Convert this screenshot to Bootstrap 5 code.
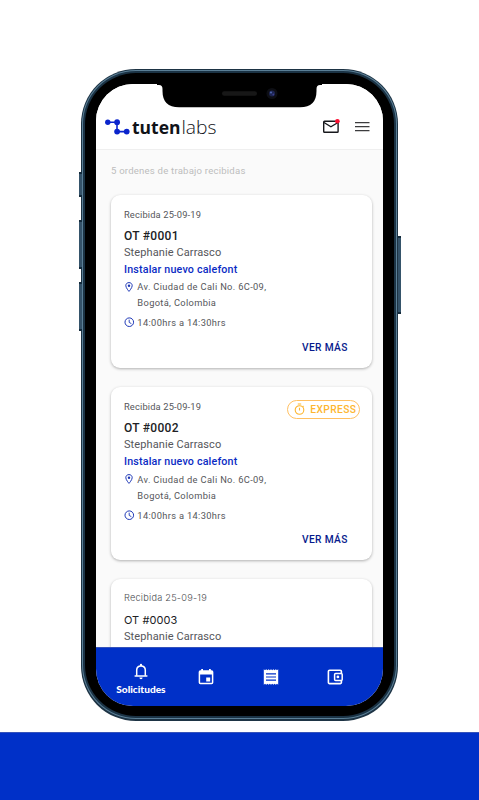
<!DOCTYPE html>
<html lang="es">
<head>
<meta charset="utf-8">
<meta name="viewport" content="width=device-width, initial-scale=1">
<title>Tutenlabs</title>
<link href="https://cdn.jsdelivr.net/npm/bootstrap@5.3.0/dist/css/bootstrap.min.css" rel="stylesheet">
<style>
  body { font-family: Roboto, "Liberation Sans", sans-serif; background: #fff; color: #55565a; }
  .stage { width: 479px; height: 800px; padding-top: 69px; }
  .phone { width: 317px; height: 651.5px; margin-left: 81px; border-radius: 55px; padding: 1.2px;
    background: #1d3344; }
  .phone-rim { border-radius: 54px; padding: 1.3px; background: #5b7f96; }
  .phone-edge { border-radius: 53px; padding: 1.9px; background: #1b3345; }
  .phone-bezel { border-radius: 51px; padding: 11px 10.6px 10.4px; background: #000; }
  .screen { border-radius: 37px; background: #fafafa; }
  .side-key { width: 3px; background: #35536a; border-top: 2px solid #142b3c; border-bottom: 2px solid #142b3c; }
  .key-a { left: 78.5px; top: 172px; height: 25px; }
  .key-b { left: 78.5px; top: 220px; height: 49px; }
  .key-c { left: 78.5px; top: 282px; height: 49px; }
  .key-d { left: 398px; top: 236px; height: 78px; }
  .notch { left: 157px; top: 83px; }
  .topbar { height: 65.5px; padding: 29px 12px 0 9px; background: #fff; border-bottom: 1px solid #efefef; }
  .summary { padding: 14px 0 0 15px; height: 45.5px; font-size: 9.6px; line-height: 14px; letter-spacing: .2px; color: #bdbdbd; }
  .feed { height: 497px; }
  .order { width: 260.5px; height: 173px; margin: 0 0 18.7px 15.5px; padding: 13.7px 12px 0 12.5px; border: 0; border-radius: 9px;
    box-shadow: 0 1px 3px rgba(0,0,0,.3); color: #55565a; }
  .received { font-size: 9.3px; line-height: 12px; letter-spacing: .16px; }
  .number { margin-top: 6.1px; font-size: 12px; line-height: 18px; font-weight: 500; letter-spacing: .28px; color: #202124; }
  .client { font-size: 11px; line-height: 16px; letter-spacing: .1px; }
  .task { font-size: 10.7px; line-height: 18px; font-weight: 500; letter-spacing: .18px; color: #0a2bc4; }
  .place { font-size: 9.3px; line-height: 15.8px; letter-spacing: .34px; }
  .place svg { margin: 2.4px 0 0 1px; }
  .hours { margin-top: 6px; font-size: 9.3px; line-height: 12px; letter-spacing: .34px; }
  .more { position: static; margin-top: 12.7px; padding-right: 12.3px; font-size: 10.2px; line-height: 14px; font-weight: 500; letter-spacing: .36px; color: #071a8c; }
  .order.urgent .place { margin-top: 1.2px; }
  .order.urgent .more { margin-top: 11.5px; }
  .express { right: 12px; top: 12.5px; width: 73px; height: 19px; padding: 0 2.6px 0 6px; border: 1px solid #ffc061; border-radius: 10px;
    font-size: 10.2px; font-weight: 500; line-height: 17px; letter-spacing: .42px; color: #fdb62f; }
  .order.plain .received, .order.plain .number { font-family: Inter, "Liberation Sans", sans-serif; font-weight: 300; }
  .order.plain .received { font-size: 9.2px; letter-spacing: .24px; color: #4a4b4f; }
  .order.plain .number { font-size: 11px; font-weight: 400; letter-spacing: .05px; }
  .tabbar { height: 59.3px; background: #0030c8; border-top: 1px solid #3452bb; color: #fff; padding: 0 13.4px; }
  .tab-item { width: 64.6px; }
  .tab-item:first-child { padding-right: 1.5px; }
  .tab-label { font-family: Lato, "Liberation Sans", sans-serif; font-weight: 900; font-size: 10.1px; line-height: 12px; margin-top: 3px; }
  .footer-band { height: 68.5px; margin-top: 11.5px; background: #0030c8; border-top: 1px solid #3452bb; }
</style>
</head>
<body>
<main class="stage position-relative overflow-hidden">
  <div class="side-key key-a position-absolute"></div>
  <div class="side-key key-b position-absolute"></div>
  <div class="side-key key-c position-absolute"></div>
  <div class="side-key key-d position-absolute"></div>

  <div class="phone"><div class="phone-rim h-100"><div class="phone-edge h-100"><div class="phone-bezel h-100">
    <div class="screen h-100 overflow-hidden d-flex flex-column">
      <header class="topbar d-flex justify-content-between align-items-start flex-shrink-0">
        <svg width="120" height="32" viewBox="0 -4 120 32" role="img" aria-label="tutenlabs">
          <g fill="none" stroke="#0a24cc" stroke-width="1.6"><path d="M3 5.2H12V14.6H21"/></g>
          <g fill="#0a24cc"><circle cx="2.8" cy="5.2" r="2.7"/><circle cx="12.1" cy="5.2" r="2.9"/><circle cx="12.1" cy="14.6" r="2.9"/><circle cx="21.7" cy="14.6" r="2.9"/></g>
          <text x="27" y="17.4" font-family="Open Sans, sans-serif" font-size="18.5" font-weight="700" fill="#111318" textLength="48.5" lengthAdjust="spacingAndGlyphs">tuten</text>
          <text x="76.5" y="17.4" font-family="Open Sans, sans-serif" font-size="18.5" font-weight="300" fill="#111318" textLength="35" lengthAdjust="spacingAndGlyphs">labs</text>
        </svg>
        <svg class="mt-1" width="50" height="18" viewBox="0 0 50 18" role="img" aria-label="Mensajes y menú">
          <rect x="2.7" y="4.2" width="14.4" height="11" rx=".8" fill="none" stroke="#17181c" stroke-width="1.4"/>
          <path d="M3 5.5L9.9 9.8L17 5.5" fill="none" stroke="#17181c" stroke-width="1.4"/>
          <circle cx="16.4" cy="4.3" r="2.3" fill="#fb0d30"/>
          <path d="M34 5.7H48.5M34 9.7H48.5M34 13.7H48.5" stroke="#3c3c3e" stroke-width="1.3"/>
        </svg>
      </header>

      <section class="feed overflow-hidden flex-shrink-0">
        <div class="summary">5 ordenes de trabajo recibidas</div>

        <article class="card order">
          <div class="received">Recibida 25-09-19</div>
          <div class="number">OT #0001</div>
          <div class="client">Stephanie Carrasco</div>
          <div class="task">Instalar nuevo calefont</div>
          <div class="place d-flex">
            <svg class="flex-shrink-0" width="12.4" height="10" viewBox="0 0 12.4 10"><path d="M4 .6C2.1.6.8 1.9.8 3.7C.8 5.8 4 9.4 4 9.4S7.2 5.8 7.2 3.7C7.2 1.9 5.9.6 4 .6Z" fill="none" stroke="#1b35b5" stroke-width="1"/><circle cx="4" cy="3.7" r="1.2" fill="#1b35b5"/></svg>
            <div>Av. Ciudad de Cali No. 6C-09,<br>Bogotá, Colombia</div>
          </div>
          <div class="hours d-flex align-items-center">
            <svg class="flex-shrink-0" width="13.4" height="11" viewBox="0 0 13.4 11"><circle cx="5.3" cy="5.2" r="4.3" fill="none" stroke="#1b35b5" stroke-width="1"/><path d="M5.2 2.7V5.4L7.4 6.7" fill="none" stroke="#1b35b5" stroke-width=".9"/></svg>
            <span>14:00hrs a 14:30hrs</span>
          </div>
          <div class="more text-end">VER MÁS</div>
        </article>

        <article class="card order urgent">
          <div class="express position-absolute d-flex align-items-center justify-content-between">
            <svg width="12" height="13" viewBox="0 0 12 13" fill="none" stroke="#fdb62f" stroke-width="1.1"><circle cx="5.5" cy="7" r="4.3"/><path d="M3.8 1H7.2M5.5 4.7V7.6M8.7 3.8L9.5 3"/></svg>
            <span>EXPRESS</span>
          </div>
          <div class="received">Recibida 25-09-19</div>
          <div class="number">OT #0002</div>
          <div class="client">Stephanie Carrasco</div>
          <div class="task">Instalar nuevo calefont</div>
          <div class="place d-flex">
            <svg class="flex-shrink-0" width="12.4" height="10" viewBox="0 0 12.4 10"><path d="M4 .6C2.1.6.8 1.9.8 3.7C.8 5.8 4 9.4 4 9.4S7.2 5.8 7.2 3.7C7.2 1.9 5.9.6 4 .6Z" fill="none" stroke="#1b35b5" stroke-width="1"/><circle cx="4" cy="3.7" r="1.2" fill="#1b35b5"/></svg>
            <div>Av. Ciudad de Cali No. 6C-09,<br>Bogotá, Colombia</div>
          </div>
          <div class="hours d-flex align-items-center">
            <svg class="flex-shrink-0" width="13.4" height="11" viewBox="0 0 13.4 11"><circle cx="5.3" cy="5.2" r="4.3" fill="none" stroke="#1b35b5" stroke-width="1"/><path d="M5.2 2.7V5.4L7.4 6.7" fill="none" stroke="#1b35b5" stroke-width=".9"/></svg>
            <span>14:00hrs a 14:30hrs</span>
          </div>
          <div class="more text-end">VER MÁS</div>
        </article>

        <article class="card order plain">
          <div class="received">Recibida 25-09-19</div>
          <div class="number">OT #0003</div>
          <div class="client">Stephanie Carrasco</div>
        </article>
      </section>

      <nav class="tabbar d-flex align-items-center flex-shrink-0">
        <div class="tab-item d-flex flex-column align-items-center text-center pt-1">
          <svg width="14" height="17" viewBox="0 0 14 17"><path d="M2.7 12.7V7.2C2.7 4.8 4.4 2.9 7 2.9S11.3 4.8 11.3 7.2V12.7" fill="none" stroke="#fff" stroke-width="1.5"/><path d="M.6 13H13.4" stroke="#fff" stroke-width="1.5"/><path d="M5.9 3V1.8A1.1 1.1 0 0 1 8.1 1.8V3ZM5.4 14.6H8.6A1.6 1.6 0 0 1 5.4 14.6Z" fill="#fff"/></svg>
          <span class="tab-label">Solicitudes</span>
        </div>
        <div class="tab-item text-center lh-1">
          <svg width="16" height="18" viewBox="0 0 16 18"><rect x="1.4" y="3" width="13.2" height="12.6" rx="1" fill="none" stroke="#fff" stroke-width="1.5"/><path d="M1 3H15V6.4H1ZM3.2 1H5V3H3.2ZM11 1H12.8V3H11ZM8.2 9.4H12.2V13.4H8.2Z" fill="#fff"/></svg>
        </div>
        <div class="tab-item text-center lh-1">
          <svg width="16" height="18" viewBox="0 0 16 18"><path d="M.8 1.2L2 2.2L3.2 1.2L4.4 2.2L5.6 1.2L6.8 2.2L8 1.2L9.2 2.2L10.4 1.2L11.6 2.2L12.8 1.2L14 2.2L15.2 1.2V16.8L14 15.8L12.8 16.8L11.6 15.8L10.4 16.8L9.2 15.8L8 16.8L6.8 15.8L5.6 16.8L4.4 15.8L3.2 16.8L2 15.8L.8 16.8Z" fill="#fff"/><path d="M3 5.8H13M3 9H13M3 12.2H13" stroke="#0030c8" stroke-width="1.2"/></svg>
        </div>
        <div class="tab-item text-center lh-1">
          <svg width="16" height="18" viewBox="0 0 16 18"><path d="M14.4 5V3.4A1.2 1.2 0 0 0 13.2 2.2H2.6A1.2 1.2 0 0 0 1.4 3.4V14.4A1.2 1.2 0 0 0 2.6 15.6H13.2A1.2 1.2 0 0 0 14.4 14.4V12.8" fill="none" stroke="#fff" stroke-width="1.6"/><rect x="7.6" y="5.4" width="7.6" height="7" rx="1" fill="none" stroke="#fff" stroke-width="1.5"/><circle cx="10.9" cy="8.9" r="1.4" fill="#fff"/></svg>
        </div>
      </nav>
    </div>
  </div></div></div></div>

  <svg class="notch position-absolute" width="165" height="25" viewBox="0 0 165 25">
    <path d="M0 0H165V2H163Q159.500 2 159.500 6V8Q159.500 24.300 143 24.300H22Q5.500 24.300 5.500 8V6Q5.500 2 2 2H0Z" fill="#000"/>
    <rect x="65" y="8.200" width="35" height="4.600" rx="2.300" fill="#171717"/>
    <circle cx="115" cy="10.500" r="5.500" fill="#0d0e14"/><circle cx="115" cy="10.500" r="3" fill="#1c2450"/><circle cx="114" cy="9.500" r="1.100" fill="#4b62a8"/><circle cx="116.300" cy="11.500" r=".9" fill="#3c3f8c"/>
  </svg>

  <footer class="footer-band"></footer>
</main>
<script src="https://cdn.jsdelivr.net/npm/bootstrap@5.3.0/dist/js/bootstrap.bundle.min.js"></script>
</body>
</html>
